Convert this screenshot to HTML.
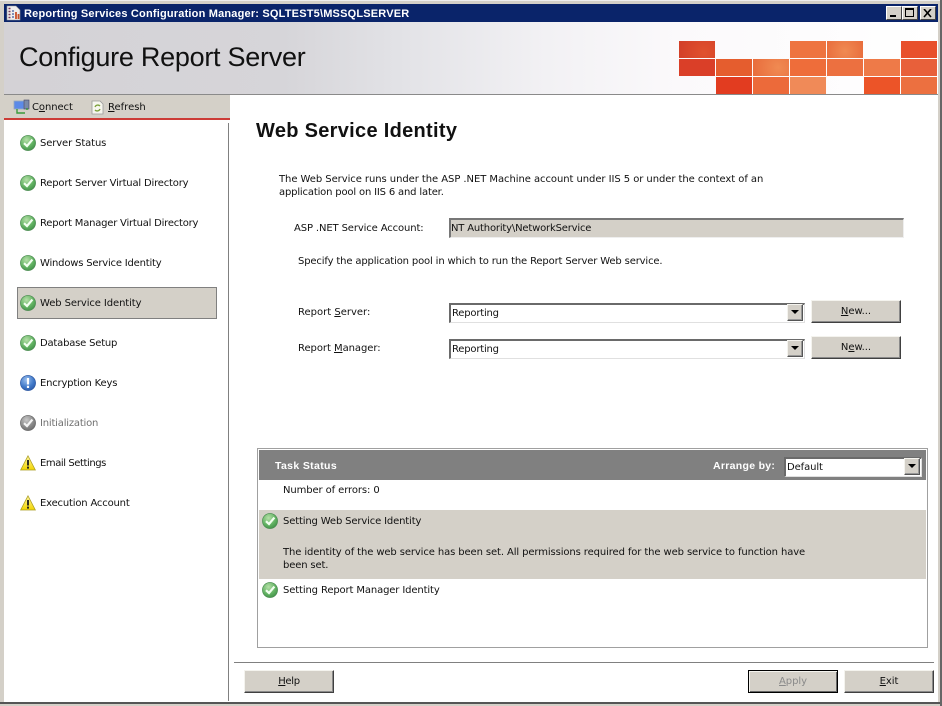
<!DOCTYPE html>
<html><head><meta charset="utf-8">
<style>
html,body{margin:0;padding:0;width:942px;height:706px;overflow:hidden;background:#fff}
body{position:relative;font-family:"DejaVu Sans","Liberation Sans",sans-serif;font-size:10px;color:#111}
div,span.a,svg.a{position:absolute}
.t{white-space:nowrap;line-height:14px;margin-top:1px;letter-spacing:-.15px}
.n{letter-spacing:-.2px}
.btn{background:#d4d0c8;box-sizing:border-box;border-top:1px solid #f4f3ee;border-left:1px solid #f4f3ee;border-right:1px solid #404040;border-bottom:1px solid #404040;box-shadow:inset -1px -1px 0 #8a8a8a;text-align:center;line-height:21px;font-size:10px;letter-spacing:-.05px}
.inp{box-sizing:border-box;background:#fff;border-top:2px solid #6a6a6a;border-left:2px solid #6a6a6a;border-right:1px solid #e0e0e0;border-bottom:1px solid #e0e0e0}
.dd{background:#d4d0c8;box-sizing:border-box;border-top:1px solid #f4f3ee;border-left:1px solid #f4f3ee;border-right:1px solid #555;border-bottom:1px solid #555;box-shadow:inset -1px -1px 0 #999;width:16px;height:17px}
.dd:after{content:"";position:absolute;left:3px;top:5px;border-left:4px solid transparent;border-right:4px solid transparent;border-top:4px solid #000}
.tile{width:36px;height:17px}
u{text-decoration:underline}
</style></head><body>
<svg width="0" height="0" style="position:absolute"><defs>
<radialGradient id="g" cx=".4" cy=".3" r=".8"><stop offset="0" stop-color="#b5e0a8"/><stop offset=".6" stop-color="#5fb060"/><stop offset="1" stop-color="#3d8a45"/></radialGradient>
<radialGradient id="b" cx=".4" cy=".3" r=".8"><stop offset="0" stop-color="#9cc0ee"/><stop offset=".6" stop-color="#3f78c8"/><stop offset="1" stop-color="#2a55a0"/></radialGradient>
<radialGradient id="s" cx=".4" cy=".3" r=".8"><stop offset="0" stop-color="#c8c8c8"/><stop offset=".6" stop-color="#888"/><stop offset="1" stop-color="#666"/></radialGradient>
<linearGradient id="y" x1="0" y1="0" x2="0" y2="1"><stop offset="0" stop-color="#fff6a0"/><stop offset="1" stop-color="#f2d400"/></linearGradient>
<symbol id="ok" viewBox="0 0 16 16"><circle cx="8" cy="8" r="7.6" fill="url(#g)" stroke="#4a8a50" stroke-width=".6"/><path d="M4 8.2L7 11l5.4-6.4" fill="none" stroke="#f2fff0" stroke-width="2.2"/></symbol>
<symbol id="gr" viewBox="0 0 16 16"><circle cx="8" cy="8" r="7.6" fill="url(#s)" stroke="#666" stroke-width=".6"/><path d="M4 8.2L7 11l5.4-6.4" fill="none" stroke="#f4f4f4" stroke-width="2.2"/></symbol>
<symbol id="in" viewBox="0 0 16 16"><circle cx="8" cy="8" r="7.6" fill="url(#b)" stroke="#2a55a0" stroke-width=".6"/><path d="M8 3v6.5M8 10.8v2.2" stroke="#fff" stroke-width="2.2"/></symbol>
<symbol id="wa" viewBox="0 0 16 16"><path d="M8 .8L15.4 15H.6z" fill="url(#y)" stroke="#a89a20" stroke-width=".7"/><path d="M8 5v5.5M8 11.6v2" stroke="#222" stroke-width="1.9"/></symbol>
</defs></svg>

<!-- window frame -->
<div style="left:0;top:0;width:942px;height:706px;background:#d4d0c8"></div>
<div style="left:0;top:0;width:942px;height:1px;background:#eee"></div>
<div style="left:4px;top:22px;width:934px;height:680px;background:#fff"></div>
<div style="left:0;top:702px;width:942px;height:2px;background:#555"></div>
<div style="left:940px;top:0;width:2px;height:706px;background:#666"></div>

<!-- title bar -->
<div style="left:4px;top:4px;width:934px;height:18px;background:#0a246a"></div>
<svg class="a" style="left:6px;top:5px" width="16" height="16" viewBox="0 0 16 16"><path d="M1 1h9l4 4v10H1z" fill="#eee" stroke="#999" stroke-width=".6"/><path d="M2.5 3.5h2M2.5 6.5h2M2.5 9.500h2M2.500 12.500h2" stroke="#7a3a5a" stroke-width="1.6"/><path d="M6 6h2M6 9h2M6 12h2" stroke="#5a70a8" stroke-width="1.6"/><path d="M10 7v7M12.500 9v5" stroke="#c8502a" stroke-width="1.8"/></svg>
<div class="t" style="left:24px;top:6px;color:#fff;font:bold 11px/14px 'Liberation Sans',sans-serif;letter-spacing:.19px">Reporting Services Configuration Manager: SQLTEST5\MSSQLSERVER</div>
<div style="left:886px;top:6px;width:16px;height:14px;background:#d4d0c8;box-sizing:border-box;border:1px solid;border-color:#fff #444 #444 #fff"><div style="left:3px;top:8px;width:6px;height:2px;background:#000"></div></div>
<div style="left:902px;top:6px;width:16px;height:14px;background:#d4d0c8;box-sizing:border-box;border:1px solid;border-color:#fff #444 #444 #fff"><div style="left:2px;top:1px;width:9px;height:9px;box-sizing:border-box;border:1px solid #000;border-top-width:2px"></div></div>
<div style="left:920px;top:6px;width:16px;height:14px;background:#d4d0c8;box-sizing:border-box;border:1px solid;border-color:#fff #444 #444 #fff"><svg class="a" style="left:2px;top:2px" width="10" height="9"><path d="M1 0l7 8M8 0L1 8" stroke="#000" stroke-width="1.6"/></svg></div>

<!-- header -->
<div style="left:4px;top:22px;width:934px;height:72px;background:linear-gradient(90deg,#d4d2d6 0,#d6d5d9 30%,#e2e2e6 42%,#f2f1f4 58%,#fbf9fb 72%,#fff 100%)"></div>
<div style="left:4px;top:94px;width:934px;height:1px;background:#8a8a8a"></div>
<div class="t" style="left:19px;top:38px;margin:0;font:27px/38px 'Liberation Sans',sans-serif;color:#111;letter-spacing:-.27px">Configure Report Server</div>

<div class="tile" style="left:679px;top:41px;background:radial-gradient(circle at 70% 70%,#e0512e,#d23e28)"></div>
<div class="tile" style="left:790px;top:41px;background:#ee7440"></div>
<div class="tile" style="left:827px;top:41px;background:radial-gradient(circle at 50% 60%,#f08a52,#e86c3c)"></div>
<div class="tile" style="left:901px;top:41px;background:#e8502c"></div>
<div class="tile" style="left:679px;top:59px;background:#da3f28"></div>
<div class="tile" style="left:716px;top:59px;background:#e55d2e"></div>
<div class="tile" style="left:753px;top:59px;background:radial-gradient(circle at 70% 50%,#f08a52,#e86c3c)"></div>
<div class="tile" style="left:790px;top:59px;background:#ee6d3a"></div>
<div class="tile" style="left:827px;top:59px;background:#ec7040"></div>
<div class="tile" style="left:864px;top:59px;background:#ee7a48"></div>
<div class="tile" style="left:901px;top:59px;background:#e8603a"></div>
<div class="tile" style="left:716px;top:77px;background:#e23c20"></div>
<div class="tile" style="left:753px;top:77px;background:#ec6a3a"></div>
<div class="tile" style="left:790px;top:77px;background:#f08a58"></div>
<div class="tile" style="left:864px;top:77px;background:#ec5428"></div>
<div class="tile" style="left:901px;top:77px;background:#ec7040"></div>

<!-- toolbar -->
<div style="left:4px;top:95px;width:226px;height:23px;background:#d4d0c8"></div>
<div style="left:4px;top:118px;width:226px;height:2px;background:#cc3b36"></div>
<svg class="a" style="left:13px;top:99px" width="17" height="16" viewBox="0 0 17 16"><rect x="1" y="2" width="10" height="8" fill="#5c8ae8" stroke="#9ab" stroke-width=".8"/><rect x="11" y="1" width="5" height="9" fill="#7a8aa8" stroke="#446" stroke-width=".6"/><path d="M4 10v4h8M14 9v2" fill="none" stroke="#3a9a3a" stroke-width="1.4"/></svg>
<div class="t" style="left:32px;top:100px;letter-spacing:-.08px"><span>C<u>o</u>nnect</span></div>
<svg class="a" style="left:91px;top:100px" width="13" height="15" viewBox="0 0 13 15"><path d="M1 1h8l3 3v10H1z" fill="#f6f6ee" stroke="#999" stroke-width=".8"/><path d="M4 7a3 3 0 0 1 5-1M9 9a3 3 0 0 1-5 1" fill="none" stroke="#7aa03a" stroke-width="1.3"/></svg>
<div class="t" style="left:108px;top:100px;letter-spacing:0"><u>R</u>efresh</div>

<!-- sidebar -->
<div style="left:228px;top:123px;width:1px;height:578px;background:#808080"></div>
<div style="left:17px;top:287px;width:200px;height:32px;box-sizing:border-box;background:#d4d0c8;border:1px solid #808080"></div>
<svg class="a" style="left:20px;top:135px" width="16" height="16"><use href="#ok"/></svg><div class="t n" style="left:40px;top:136px;letter-spacing:-.12px">Server Status</div>
<svg class="a" style="left:20px;top:175px" width="16" height="16"><use href="#ok"/></svg><div class="t n" style="left:40px;top:176px;letter-spacing:-.19px">Report Server Virtual Directory</div>
<svg class="a" style="left:20px;top:215px" width="16" height="16"><use href="#ok"/></svg><div class="t n" style="left:40px;top:216px;letter-spacing:-.22px">Report Manager Virtual Directory</div>
<svg class="a" style="left:20px;top:255px" width="16" height="16"><use href="#ok"/></svg><div class="t n" style="left:40px;top:256px">Windows Service Identity</div>
<svg class="a" style="left:20px;top:295px" width="16" height="16"><use href="#ok"/></svg><div class="t n" style="left:40px;top:296px;letter-spacing:-.1px">Web Service Identity</div>
<svg class="a" style="left:20px;top:335px" width="16" height="16"><use href="#ok"/></svg><div class="t n" style="left:40px;top:336px">Database Setup</div>
<svg class="a" style="left:20px;top:375px" width="16" height="16"><use href="#in"/></svg><div class="t n" style="left:40px;top:376px">Encryption Keys</div>
<svg class="a" style="left:20px;top:415px" width="16" height="16"><use href="#gr"/></svg><div class="t n" style="left:40px;top:416px;color:#707070">Initialization</div>
<svg class="a" style="left:20px;top:455px" width="16" height="16"><use href="#wa"/></svg><div class="t n" style="left:40px;top:456px;letter-spacing:-.43px">Email Settings</div>
<svg class="a" style="left:20px;top:495px" width="16" height="16"><use href="#wa"/></svg><div class="t n" style="left:40px;top:496px;letter-spacing:-.18px">Execution Account</div>

<!-- main -->
<div class="t" style="left:256px;top:119px;margin-top:1px;font:bold 20px/22px 'Liberation Sans',sans-serif;letter-spacing:.3px;color:#111">Web Service Identity</div>
<div class="t" style="left:279px;top:172px;letter-spacing:-.06px">The Web Service runs under the ASP .NET Machine account under IIS 5 or under the context of an</div>
<div class="t" style="left:279px;top:185px;letter-spacing:-.17px">application pool on IIS 6 and later.</div>
<div class="t" style="left:294px;top:221px;letter-spacing:-.12px">ASP .NET Service Account:</div>
<div style="left:449px;top:218px;width:455px;height:20px;box-sizing:border-box;background:#d4d0c8;border-top:2px solid #777;border-left:2px solid #777;border-right:1px solid #eee;border-bottom:1px solid #eee"></div>
<div class="t" style="left:451px;top:221px;letter-spacing:-.18px">NT Authority\NetworkService</div>
<div class="t" style="left:298px;top:254px">Specify the application pool in which to run the Report Server Web service.</div>

<div class="t" style="left:298px;top:305px;letter-spacing:0">Report <u>S</u>erver:</div>
<div class="inp" style="left:449px;top:303px;width:356px;height:20px"></div>
<div class="t" style="left:452px;top:306px;letter-spacing:-.2px">Reporting</div>
<div class="dd" style="left:787px;top:304px"></div>
<div class="btn" style="left:811px;top:300px;width:90px;height:23px"><u>N</u>ew...</div>

<div class="t" style="left:298px;top:341px;letter-spacing:-.05px">Report <u>M</u>anager:</div>
<div class="inp" style="left:449px;top:339px;width:356px;height:20px"></div>
<div class="t" style="left:452px;top:342px;letter-spacing:-.2px">Reporting</div>
<div class="dd" style="left:787px;top:340px"></div>
<div class="btn" style="left:811px;top:336px;width:90px;height:23px">N<u>e</u>w...</div>

<!-- task status -->
<div style="left:257px;top:448px;width:671px;height:200px;box-sizing:border-box;border:1px solid #a0a0a0;background:#fff"></div>
<div style="left:259px;top:450px;width:667px;height:30px;background:#808080"></div>
<div class="t" style="left:275px;top:459px;margin:0;color:#fff;font-weight:bold;font-size:10.500px;font-family:'Liberation Sans',sans-serif;letter-spacing:.35px">Task Status</div>
<div class="t" style="left:713px;top:459px;margin:0;color:#fff;font-weight:bold;font-size:10.500px;font-family:'Liberation Sans',sans-serif;letter-spacing:.3px">Arrange by:</div>
<div class="inp" style="left:784px;top:457px;width:138px;height:20px"></div>
<div class="t" style="left:787px;top:460px;letter-spacing:-.1px">Default</div>
<div class="dd" style="left:904px;top:458px"></div>
<div class="t" style="left:283px;top:483px;letter-spacing:-.1px">Number of errors: 0</div>
<div style="left:259px;top:510px;width:667px;height:69px;background:#d4d0c8"></div>
<svg class="a" style="left:262px;top:513px" width="16" height="16"><use href="#ok"/></svg>
<div class="t" style="left:283px;top:514px">Setting Web Service Identity</div>
<div class="t" style="left:283px;top:545px;letter-spacing:-.11px">The identity of the web service has been set. All permissions required for the web service to function have</div>
<div class="t" style="left:283px;top:558px">been set.</div>
<svg class="a" style="left:262px;top:582px" width="16" height="16"><use href="#ok"/></svg>
<div class="t" style="left:283px;top:583px;letter-spacing:-.13px">Setting Report Manager Identity</div>

<!-- footer -->
<div style="left:234px;top:662px;width:700px;height:1px;background:#808080"></div>
<div class="btn" style="left:244px;top:670px;width:90px;height:23px;letter-spacing:-.3px"><u>H</u>elp</div>
<div class="btn" style="left:748px;top:670px;width:90px;height:23px;border:1px solid #000;color:#8a8a8a;box-shadow:inset 1px 1px 0 #f4f3ee,inset -1px -1px 0 #666"><u>A</u>pply</div>
<div class="btn" style="left:844px;top:670px;width:90px;height:23px"><u>E</u>xit</div>
</body></html>
